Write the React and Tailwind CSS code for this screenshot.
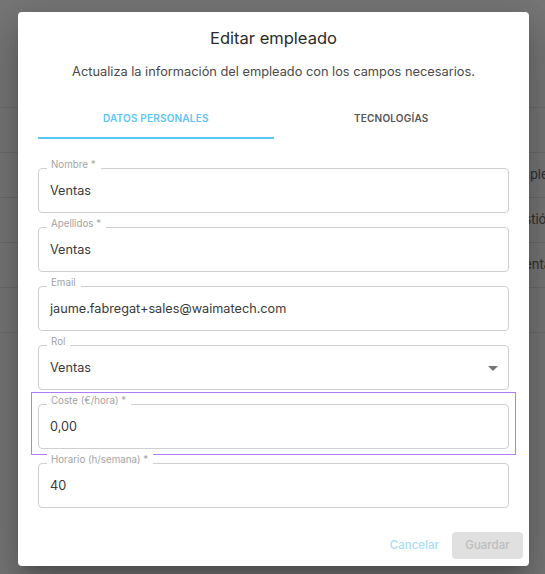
import React from "react";

function Field({ label, value, select }) {
  return (
    <div className="relative h-[45px] rounded-[4px] border border-[#cfcfcf] flex items-center pl-[11px]">
      <span className="absolute left-[8px] top-[-10px] bg-white pl-[4px] pr-[5px] text-[9.75px] leading-[12px] text-[#a3a3a3] whitespace-nowrap">
        {label}
      </span>
      <span className="text-[12.7px] text-[#3a3a3a]">{value}</span>
      {select && (
        <svg
          className="absolute right-[3px] top-1/2 -translate-y-1/2"
          width="24"
          height="24"
          viewBox="0 0 24 24"
        >
          <path d="M7 10l5 5 5-5z" fill="#757575" />
        </svg>
      )}
    </div>
  );
}

export default function App() {
  return (
    <div className="relative h-[574px] w-full overflow-hidden bg-[#767676] font-['Inter',sans-serif]">
      {/* background page */}
      <div className="flex flex-col">
        <div className="h-[108px] border-b border-[#6b6b6b]" />
        <div className="h-[45px] border-b border-[#6b6b6b]" />
        <div className="h-[45px] border-b border-[#6b6b6b] flex items-center pl-[507px] text-[13px] text-[#2e2e2e] whitespace-nowrap">
          Simple
        </div>
        <div className="h-[45px] border-b border-[#6b6b6b] flex items-center pl-[507px] text-[13px] text-[#2e2e2e] whitespace-nowrap">
          Gestión
        </div>
        <div className="h-[45px] border-b border-[#6b6b6b] flex items-center pl-[507px] text-[13px] text-[#2e2e2e] whitespace-nowrap">
          Cuentas
        </div>
        <div className="h-[45px] border-b border-[#6b6b6b]" />
      </div>

      {/* dialog */}
      <div className="absolute inset-0 pt-[12px] pl-[18px]">
        <div className="w-[511px] rounded-[4px] bg-white shadow-[0_11px_15px_-7px_rgba(0,0,0,0.2),0_24px_38px_3px_rgba(0,0,0,0.14),0_9px_46px_8px_rgba(0,0,0,0.12)] pb-[7px]">
          <div className="pt-[14px] text-center text-[16.5px] leading-[24px] text-[#2b2b2b]">
            Editar empleado
          </div>
          <div className="mt-[12px] text-center text-[12.8px] leading-[20px] text-[#4a4a4a]">
            Actualiza la información del empleado con los campos necesarios.
          </div>

          <div className="mx-[20px] mt-[17px]">
            <div className="grid grid-cols-2">
              <div className="h-[38px] flex items-center justify-center text-[10px] font-semibold tracking-[0.02em] text-[#5cc6f7]">
                DATOS PERSONALES
              </div>
              <div className="h-[38px] flex items-center justify-center text-[10px] font-semibold tracking-[0.02em] text-[#555555]">
                TECNOLOGÍAS
              </div>
            </div>
            <div className="h-[2px] w-1/2 bg-[#5cc6f7]" />
          </div>

          <div className="mx-[20px] mt-[29px] flex flex-col gap-[14px]">
            <Field label="Nombre *" value="Ventas" />
            <Field label="Apellidos *" value="Ventas" />
            <Field label="Email" value="jaume.fabregat+sales@waimatech.com" />
            <Field label="Rol" value="Ventas" select />
            <div className="relative">
              <Field label="Coste (€/hora) *" value="0,00" />
              <div className="pointer-events-none absolute -left-[7px] -right-[7px] -top-[12px] -bottom-[6px] border-[1.5px] border-[#b37cf2]" />
            </div>
            <Field label="Horario (h/semana) *" value="40" />
          </div>

          <div className="mt-[24px] flex items-center justify-end gap-[13px] pr-[6px]">
            <span className="text-[11.5px] font-medium text-[#aadcf6]">Cancelar</span>
            <div className="flex h-[27px] w-[71px] items-center justify-center rounded-[4px] bg-[#e0e0e0] text-[11.5px] font-medium text-[#bdbdbd]">
              Guardar
            </div>
          </div>
        </div>
      </div>
    </div>
  );
}
